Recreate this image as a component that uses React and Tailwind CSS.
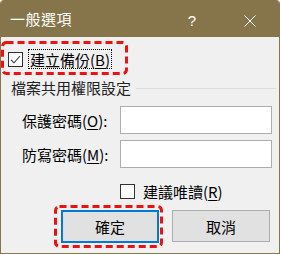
import React from "react";

const F = { fontFamily: '"Noto Sans CJK TC", "Noto Sans CJK SC", "Microsoft JhengHei", sans-serif' };

function Check({ checked }) {
  return (
    <div className="w-[15px] h-[15px] border border-[#333333] bg-white flex items-center justify-center shrink-0">
      {checked && (
        <svg width="13" height="13" viewBox="0 0 13 13">
          <path d="M2 6.8 L5 9.8 L11 3" fill="none" stroke="#333" strokeWidth="1.1" />
        </svg>
      )}
    </div>
  );
}

function Dashed({ x, y, w, h }) {
  return (
    <svg className="absolute pointer-events-none" style={{ left: x, top: y }} width={w} height={h}>
      <rect x="1.5" y="1.5" width={w - 3} height={h - 3} rx="4" fill="none" stroke="#ee1111" strokeWidth="3" strokeDasharray="7 4" />
    </svg>
  );
}

export default function App() {
  return (
    <div className="relative w-[281px] h-[254px] bg-white" style={F}>
      <div className="w-[280px] h-[254px] flex flex-col bg-[#f0f0f0] border-x border-b border-[#86754a] rounded-t-[4px] overflow-hidden">
        <div className="h-[37px] bg-[#86754a] flex items-center text-white shrink-0 -mx-px">
          <span className="ml-[10px] text-[15px] leading-none tracking-[0.5px]">一般選項</span>
          <span className="ml-auto text-[15px] leading-none mt-[3px] font-['Liberation_Sans']">?</span>
          <svg className="ml-[48px] mr-[24px] mt-[4px]" width="12" height="12" viewBox="0 0 12 12">
            <path d="M0.5 0.5 L11.5 11.5 M11.5 0.5 L0.5 11.5" stroke="white" strokeWidth="1" />
          </svg>
        </div>

        <div className="flex items-center mt-[12px] pl-[7px] h-[20px] text-[15px] text-black">
          <Check checked />
          <span className="ml-[5px] border border-dotted border-black px-[1px] h-[20px] flex items-center leading-none">
            建立備份(<u className="underline-offset-2">B</u>)
          </span>
        </div>

        <div className="flex items-center mt-[9px] h-[18px] text-[15px] text-[#222]">
          <span className="ml-[10px] leading-none">檔案共用權限設定</span>
          <div className="flex-1 h-px bg-[#dcdcdc] ml-[5px] mr-[3px] mt-[3px]"></div>
        </div>

        <div className="flex items-center mt-[10px] h-[28px] text-[15px] text-black">
          <span className="ml-[21px] w-[98px] leading-none">保護密碼(<u className="underline-offset-2">O</u>):</span>
          <div className="w-[152px] h-[28px] bg-white border border-[#adadad]"></div>
        </div>

        <div className="flex items-center mt-[6px] h-[28px] text-[15px] text-black">
          <span className="ml-[21px] w-[98px] leading-none">防寫密碼(<u className="underline-offset-2">M</u>):</span>
          <div className="w-[152px] h-[28px] bg-white border border-[#adadad]"></div>
        </div>

        <div className="flex items-center mt-[16px] h-[15px] pl-[119px] text-[15px] text-black">
          <Check />
          <span className="ml-[8px] leading-none">建議唯讀(<u className="underline-offset-2">R</u>)</span>
        </div>

        <div className="flex mt-[11px] pl-[60px] text-[15px] text-black">
          <div className="w-[98px] h-[33px] bg-[#e1e1e1] border-2 border-[#0078d7] flex items-center justify-center leading-none">確定</div>
          <div className="ml-[13px] w-[98px] h-[32px] bg-[#e1e1e1] border border-[#adadad] flex items-center justify-center leading-none">取消</div>
        </div>
      </div>

      <Dashed x={1} y={41} w={127} h={34} />
      <Dashed x={54} y={205} w={109} h={43} />
    </div>
  );
}
